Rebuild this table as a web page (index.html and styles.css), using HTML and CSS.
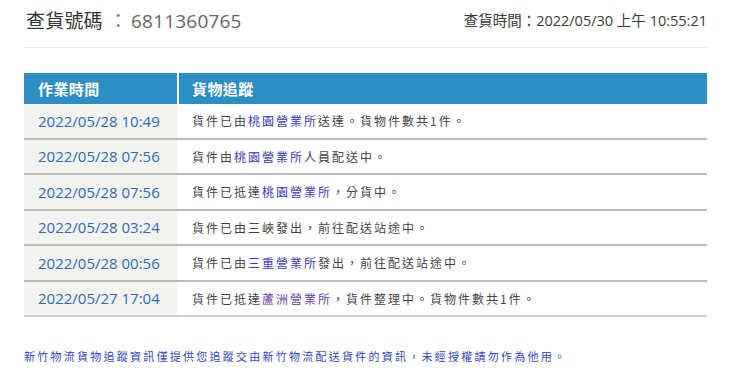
FILE: index.html
```html
<!DOCTYPE html>
<html lang="zh-Hant">
<head>
<meta charset="utf-8">
<title>查貨</title>
<link rel="stylesheet" href="styles.css">
</head>
<body>
<div class="page">
  <div class="top">
    <div class="title"><span class="label">查貨號碼</span><span class="sep">：</span>6811360765</div>
    <div class="stamp">查貨時間：2022/05/30 上午 10:55:21</div>
  </div>
  <table class="track">
    <thead>
      <tr><th class="c-time">作業時間</th><th class="c-desc">貨物追蹤</th></tr>
    </thead>
    <tbody>
      <tr><td class="c-time">2022/05/28 10:49</td><td class="c-desc">貨件已由<a class="lnk">桃園營業所</a>送達。貨物件數共1件。</td></tr>
      <tr><td class="c-time">2022/05/28 07:56</td><td class="c-desc">貨件由<a class="lnk">桃園營業所</a>人員配送中。</td></tr>
      <tr><td class="c-time">2022/05/28 07:56</td><td class="c-desc">貨件已抵達<a class="lnk">桃園營業所</a>，分貨中。</td></tr>
      <tr><td class="c-time">2022/05/28 03:24</td><td class="c-desc">貨件已由三峽發出，前往配送站途中。</td></tr>
      <tr><td class="c-time">2022/05/28 00:56</td><td class="c-desc">貨件已由<a class="lnk">三重營業所</a>發出，前往配送站途中。</td></tr>
      <tr><td class="c-time">2022/05/27 17:04</td><td class="c-desc">貨件已抵達<a class="lnk visited">蘆洲營業所</a>，貨件整理中。貨物件數共1件。</td></tr>
    </tbody>
  </table>
  <p class="note">新竹物流貨物追蹤資訊僅提供您追蹤交由新竹物流配送貨件的資訊，未經授權請勿作為他用。</p>
</div>
</body>
</html>
```

FILE: styles.css
```css
html, body {
  margin: 0;
  padding: 0;
  background: #ffffff;
}
body {
  font-family: "Open Sans", "Noto Sans CJK TC", sans-serif;
  color: #333333;
}
.page {
  width: 683px;
  margin-left: 24px;
}
.top {
  height: 47px;
  border-bottom: 1px solid #ececec;
  display: flex;
  justify-content: space-between;
  align-items: center;
}
.title {
  font-size: 19px;
  color: #666666;
  padding-left: 2px;
  margin-top: -7px;
  letter-spacing: 0.2px;
}
.title .label {
  color: #333333;
  font-weight: normal;
}
.title .sep {
  color: #777777;
  margin: 0 3px 0 6px;
}
.stamp {
  font-size: 14.5px;
  color: #3a3a3a;
  margin-top: -9px;
}
.track {
  margin-top: 25px;
  width: 683px;
  border-collapse: collapse;
  border-spacing: 0;
}
.track th {
  background: #2d8ec4;
  color: #ffffff;
  font-weight: bold;
  font-size: 15px;
  text-align: left;
  height: 31px;
  padding: 0;
  vertical-align: middle;
  letter-spacing: 0.4px;
}
.track th.c-time {
  width: 154px;
  padding-left: 14px;
  border-right: 2px solid #ffffff;
  box-sizing: border-box;
}
.track th.c-desc {
  padding-left: 13px;
}
.track td {
  height: 33.5px;
  padding: 0;
  border-bottom: 2px solid #bcbcbc;
  vertical-align: middle;
}
.track tbody tr:last-child td {
  border-bottom-color: #cfcfcf;
}
.track td.c-time {
  background: #f3f3f0;
  color: #2a6cb8;
  font-size: 15px;
  padding-left: 14px;
  border-right: 2px solid #ffffff;
  box-sizing: border-box;
  width: 154px;
}
.track td.c-desc {
  font-family: "Noto Sans CJK TC", "Open Sans", sans-serif;
  font-size: 12px;
  letter-spacing: 2px;
  padding-left: 13px;
  color: #444444;
}
.lnk {
  color: #3a3ab8;
  text-decoration: none;
}
.lnk.visited {
  color: #6e3c9e;
}
.note {
  margin: 31px 0 0 0;
  font-family: "Noto Sans CJK TC", sans-serif;
  font-size: 11px;
  letter-spacing: 2.25px;
  color: #3344c4;
}
```
